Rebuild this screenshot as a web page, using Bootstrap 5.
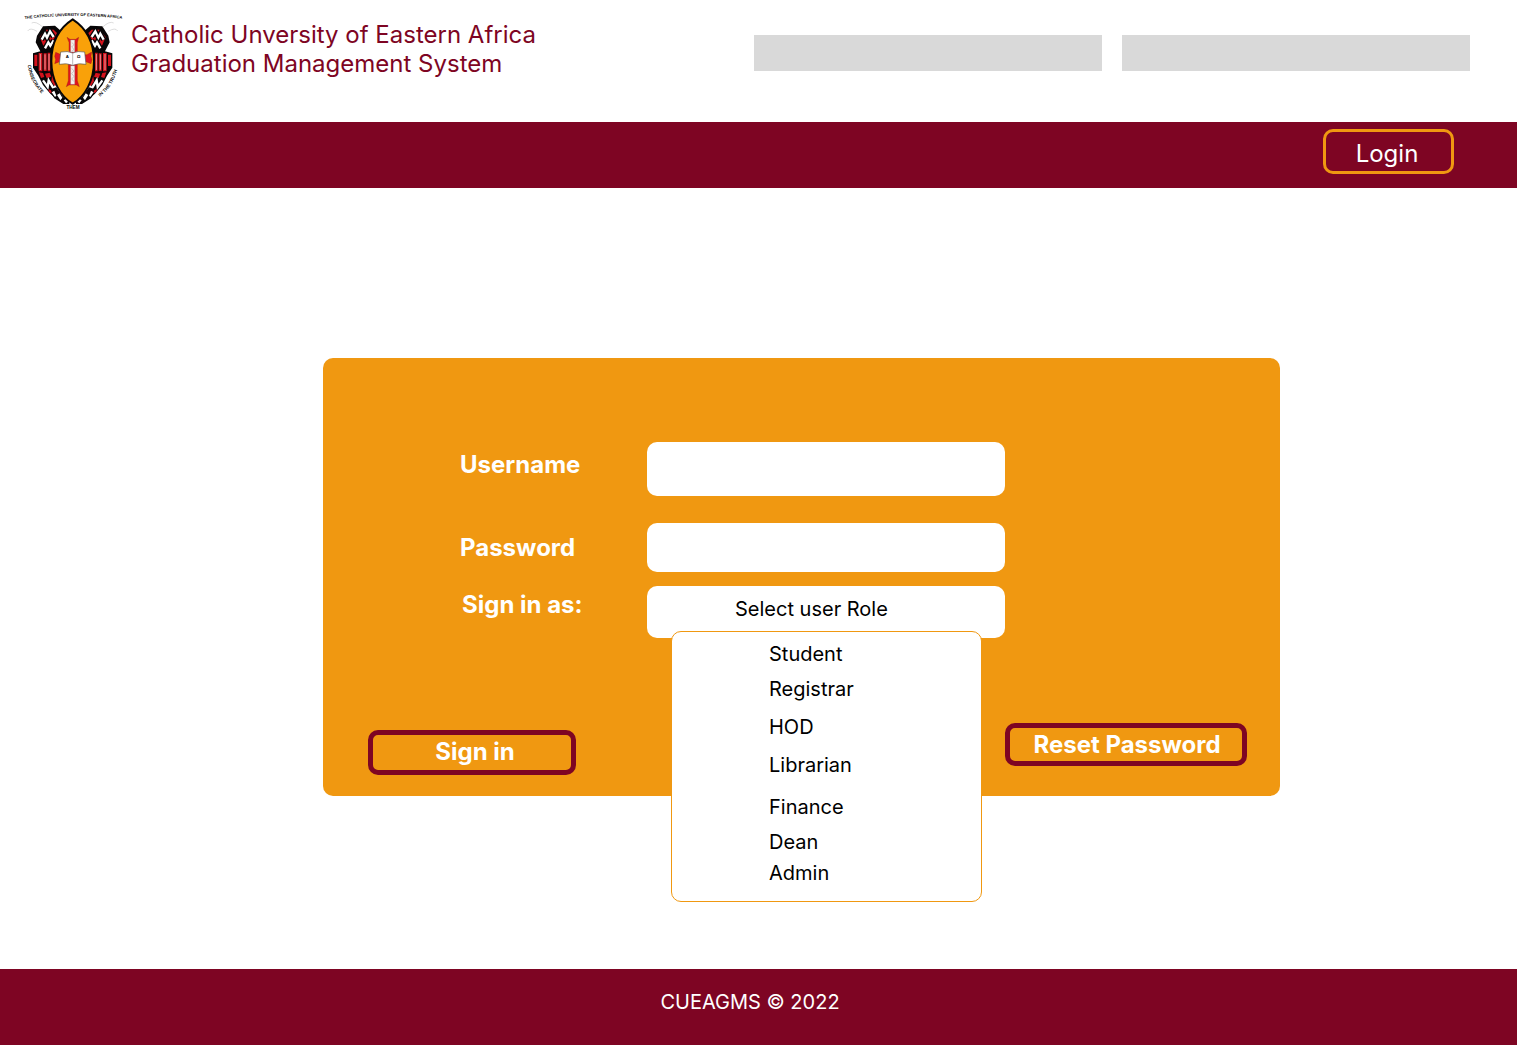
<!DOCTYPE html>
<html lang="en">
<head>
<meta charset="utf-8">
<meta name="viewport" content="width=device-width, initial-scale=1">
<title>CUEA Graduation Management System</title>
<link rel="stylesheet" href="https://cdn.jsdelivr.net/npm/bootstrap@5.3.0/dist/css/bootstrap.min.css">
<style>
  :root { --maroon: #7e0523; --amber: #f09811; }
  body { font-family: Inter, "Liberation Sans", sans-serif; color: #000; background: #fff; }
  .site-head { min-height: 122px; padding: 5px 47px 7px 15px; }
  .crest { width: 115px; height: 110px; flex: none; }
  .site-name { font-size: 24px; line-height: 29px; color: var(--maroon); margin: 15px 0 0 1px; font-weight: 400; }
  .slots { gap: 20px; padding-top: 30px; }
  .slot { width: 348px; height: 36px; background: #d9d9d9; }
  .bar { background: var(--maroon); min-height: 66px; padding: 7px 63px 14px; }
  .btn-login { width: 131px; height: 45px; border: 3px solid var(--amber); border-radius: 10px; color: #fff; font-size: 24px; line-height: 29px; padding: 3px 3px 0 0; }
  .stage { padding: 170px 0 173px 86px; }
  .panel { width: 957px; max-width: 100%; background: var(--amber); border-radius: 10px; padding: 84px 33px 21px 45px; }
  .fields { padding-left: 92px; }
  .field-label { width: 187px; flex: none; color: #fff; font-size: 24px; line-height: 29px; font-weight: 700; }
  .field-box { width: 358px; border: 0; border-radius: 10px; font-size: 20px; line-height: 24px; background: #fff; color: #000; }
  .user-row { margin-bottom: 27px; }
  .user-row .field-label { padding-top: 8px; }
  .user-row .field-box { height: 54px; }
  .pass-row { margin-bottom: 14px; }
  .pass-row .field-box { height: 49px; }
  .role-row .field-label { padding: 4px 0 0 2px; }
  .role-row .field-box { height: 52px; padding: 0 20px 6px 88px; background-image: none; }
  .role-menu { top: 45px; left: 24px; width: 311px; height: 271px; border: 1px solid var(--amber); border-radius: 10px; padding: 10px 0; background: #fff; --bs-dropdown-zindex: 5; }
  .role-menu .dropdown-item { font-size: 20px; line-height: 24px; padding: 0 0 0 97px; color: #000; margin-bottom: 11px; }
  .role-menu .roomy { margin-bottom: 14px; }
  .role-menu .wide { margin-bottom: 18px; }
  .role-menu .tight { margin-bottom: 7px; }
  .actions { margin-top: 85px; }
  .btn-act { border: 5px solid var(--maroon); border-radius: 10px; color: #fff; font-size: 24px; line-height: 29px; font-weight: 700; padding: 0 0 0 2px; }
  .btn-signin { width: 208px; height: 45px; margin-top: 7px; padding: 0 0 2px 6px; }
  .btn-reset { width: 242px; height: 43px; }
  .btn-login:hover, .btn-act:hover { color: #fff; border-color: #fff; }
  .site-foot { background: var(--maroon); color: #fff; min-height: 76px; font-size: 20px; line-height: 24px; padding: 21px 17px 31px 0; }
</style>
</head>
<body class="d-flex flex-column min-vh-100">
<header class="site-head d-flex align-items-start">
  <svg class="crest" viewBox="0 0 345 330" role="img" aria-label="University crest">
    <defs>
      <path id="arcTop" d="M29 42Q175 24 326 42"/>
      <path id="arcLeft" d="M38 180Q44 232 88 274"/>
      <path id="arcRight" d="M255 275Q298 242 309 183"/>
      <g id="side">
        <path d="M84 64L120 62 145 84 116 132 120 278 106 266 84 240 70 212 54 188 54 145 76 139 62 112 66 92Z" fill="#080607"/>
        <path d="M74 96L92 74 116 74 126 84 118 100 96 132 84 120Z" fill="#d3121c"/>
        <path d="M80 104L90 86 96 98 105 79 116 96M90 130L100 112 106 122 116 106" fill="none" stroke="#080607" stroke-width="15"/>
        <path d="M80 104L90 86 96 98 105 79 116 96M90 130L100 112 106 122 116 106" fill="none" stroke="#fff" stroke-width="7"/>
        <path d="M58 149h9v34h-9zM71 144h11v55h-11zM86 145h9v53h-9zM98 143h8v56h-8zM72 202l12 2 4 12-10 3zM90 206l14-3 5 12-14 4zM112 208l14 24-6 14-11-17z" fill="#d3121c"/>
        <path d="M76 147v48M90 148v46M102 147v48" stroke="#f0dede" stroke-width="2"/>
        <path d="M84 226L98 246 101 226 118 254 121 242" fill="none" stroke="#fff" stroke-width="7"/>
        <path d="M83 66Q62 47 50 54M66 79Q45 66 38 78" fill="none" stroke="#bbb" stroke-width="1.5"/>
        <path d="M101 254L124 247 144 275 163 287 163 297 145 297 118 280Z" fill="#080607"/>
        <path d="M110 262l8-5 6 15-4 4zM126 270l8-5 8 13-6 8zM146 286l7-4 6 8-6 5z" fill="#fff"/>
        <path d="M100 252l8 4 2 9-8-4z" fill="#d3121c"/>
      </g>
    </defs>
    <use href="#side"/>
    <use href="#side" transform="matrix(-1 0 0 1 346 0)"/>
    <path d="M173 43C131 70 109 112 109 169C109 227 137 275 173 296C210 275 237 227 237 169C237 112 215 70 173 43Z" fill="#f9a109" stroke="#080607" stroke-width="6"/>
    <path d="M156 97l9 6h17l9-6-4 16v36h29l14-8-2 13 3 10-3 12-15-6h-26v57l6 18-9-5h-22l-8 5 6-18v-57h-26l-15 6 3-12-3-10 3-12 14 6h26v-36z" fill="#e0151c" stroke="#8b1714" stroke-width="1"/>
    <path d="M167 105h12v36h-12zM167 182h12v56h-12z" fill="#f4f0ee" stroke="#999"/>
    <path d="M170 112l7 7-7 7 7 7-7 7M170 190l7 8-7 8 7 8-7 8 7 8" fill="none" stroke="#999" stroke-width="1.5"/>
    <path d="M137 141Q158 137 173 144Q188 137 209 141L213 178Q191 173 173 181Q155 173 133 178Z" fill="#fff" stroke="#555" stroke-width="2"/>
    <path d="M173 144v37" stroke="#999" stroke-width="2"/>
    <g font-family="Liberation Sans, sans-serif" font-weight="700" fill="#080607">
      <text x="157" y="160" font-size="13" text-anchor="middle">A</text>
      <text x="191" y="160" font-size="13" text-anchor="middle">Ω</text>
      <text font-size="12"><textPath href="#arcTop">THE CATHOLIC UNIVERSITY OF EASTERN AFRICA</textPath></text>
      <text font-size="14"><textPath href="#arcLeft">CONSECRATE</textPath></text>
      <text font-size="14"><textPath href="#arcRight">IN THE TRUTH</textPath></text>
      <text x="174" y="311" font-size="14" text-anchor="middle">THEM</text>
    </g>
  </svg>
  <h1 class="site-name">Catholic Unversity of Eastern Africa<br>Graduation Management System</h1>
  <div class="slots d-flex ms-auto">
    <div class="slot"></div>
    <div class="slot"></div>
  </div>
</header>
<nav class="bar d-flex justify-content-end align-items-start">
  <button type="button" class="btn btn-login">Login</button>
</nav>
<main class="stage flex-grow-1 d-flex justify-content-center align-items-start">
  <form class="panel">
    <div class="fields">
      <div class="user-row d-flex align-items-start">
        <label class="field-label" for="username">Username</label>
        <input class="form-control field-box" type="text" id="username">
      </div>
      <div class="pass-row d-flex align-items-center">
        <label class="field-label" for="password">Password</label>
        <input class="form-control field-box" type="password" id="password">
      </div>
      <div class="role-row d-flex align-items-start">
        <label class="field-label" for="role">Sign in as:</label>
        <div class="position-relative">
          <select class="form-select field-box" id="role">
            <option>Select user Role</option>
          </select>
          <ul class="dropdown-menu show role-menu">
            <li><button type="button" class="dropdown-item">Student</button></li>
            <li><button type="button" class="dropdown-item roomy">Registrar</button></li>
            <li><button type="button" class="dropdown-item roomy">HOD</button></li>
            <li><button type="button" class="dropdown-item wide">Librarian</button></li>
            <li><button type="button" class="dropdown-item">Finance</button></li>
            <li><button type="button" class="dropdown-item tight">Dean</button></li>
            <li><button type="button" class="dropdown-item">Admin</button></li>
          </ul>
        </div>
      </div>
    </div>
    <div class="actions d-flex justify-content-between align-items-start">
      <button type="submit" class="btn btn-act btn-signin">Sign in</button>
      <button type="button" class="btn btn-act btn-reset">Reset Password</button>
    </div>
  </form>
</main>
<footer class="site-foot text-center">CUEAGMS © 2022</footer>
<script src="https://cdn.jsdelivr.net/npm/bootstrap@5.3.0/dist/js/bootstrap.bundle.min.js"></script>
</body>
</html>
